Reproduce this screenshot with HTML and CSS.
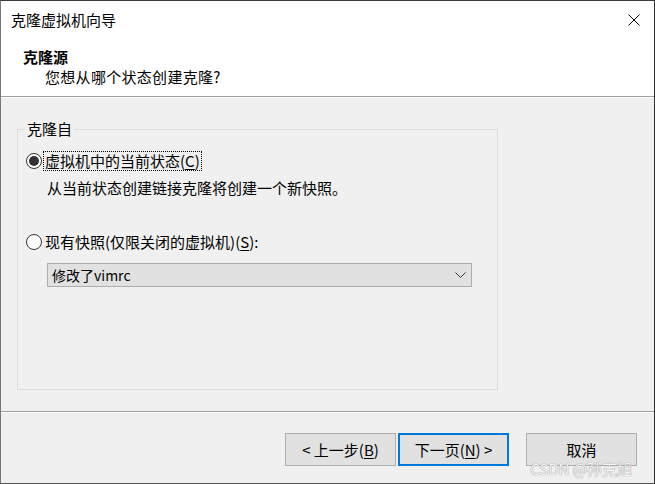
FILE: index.html
```html
<!DOCTYPE html>
<html lang="zh-CN">
<head>
<meta charset="utf-8">
<title>克隆虚拟机向导</title>
<link rel="stylesheet" href="styles.css">
</head>
<body>
<div class="window">
  <div class="header">
    <div class="titlebar">
      <span class="title">克隆虚拟机向导</span>
      <svg class="close" width="12" height="12" viewBox="0 0 12 12"><path d="M0.5 0.5 L11.5 11.5 M11.5 0.5 L0.5 11.5" stroke="#000" stroke-width="1" fill="none"/></svg>
    </div>
    <div class="intro">
      <div class="intro-title">克隆源</div>
      <div class="intro-sub">您想从哪个状态创建克隆?</div>
    </div>
  </div>
  <div class="body">
    <fieldset class="group">
      <legend class="legend">克隆自</legend>
      <div class="radio-row first">
        <span class="radio checked"></span>
        <span class="label focus">虚拟机中的当前状态(<u>C</u>)</span>
      </div>
      <div class="desc">从当前状态创建链接克隆将创建一个新快照。</div>
      <div class="radio-row second">
        <span class="radio"></span>
        <span class="label">现有快照(仅限关闭的虚拟机)(<u>S</u>):</span>
      </div>
      <div class="select">
        <span class="select-text">修改了vimrc</span>
        <svg class="chevron" width="11" height="6" viewBox="0 0 11 6"><path d="M0.5 0.5 L5.5 5.5 L10.5 0.5" stroke="#333" stroke-width="1" fill="none"/></svg>
      </div>
    </fieldset>
  </div>
  <div class="footer">
    <button class="btn">&lt; 上一步(<u>B</u>)</button>
    <button class="btn primary">下一页(<u>N</u>) &gt;</button>
    <button class="btn cancel">取消</button>
    <span class="watermark">CSDN @孙克旭</span>
  </div>
</div>
</body>
</html>
```

FILE: styles.css
```css
* { box-sizing: border-box; }
html, body {
  margin: 0;
  padding: 0;
  width: 655px;
  height: 484px;
  overflow: hidden;
  background: #f0f0f0;
}
body {
  font-family: "Noto Sans CJK SC", "Microsoft YaHei", sans-serif;
  font-size: 15px;
  color: #000;
}
.window {
  position: relative;
  width: 655px;
  height: 484px;
  border: 1px solid #777;
  border-top-color: #3a3a3a;
  border-right-color: #2e2e2e;
  border-bottom-color: #555;
  background: #f0f0f0;
  display: flex;
  flex-direction: column;
}
.header {
  background: #fff;
  border-bottom: 1px solid #a0a0a0;
  height: 96px;
  flex: none;
}
.titlebar {
  height: 37px;
  display: flex;
  align-items: center;
  justify-content: space-between;
  padding: 0 14px 0 10px;
}
.title { line-height: 20px; }
.close { display: block; }
.intro { padding: 9px 0 0 0; }
.intro-title {
  font-weight: bold;
  line-height: 20px;
  padding-left: 22px;
}
.intro-sub {
  line-height: 20px;
  padding-left: 44px;
  letter-spacing: 0.3px;
}
.body {
  flex: none;
  height: 314px;
  border-top: 1px solid #fff;
  padding: 21px 0 0 16px;
}
.group {
  margin: 0;
  width: 481px;
  height: 271px;
  border: 1px solid #dcdcdc;
  padding: 0;
}
.legend {
  margin-left: 7px;
  padding: 0 2px;
  line-height: 20px;
}
.radio-row {
  display: flex;
  align-items: center;
  height: 20px;
  padding-left: 8px;
}
.radio-row.first { margin-top: 12px; }
.radio-row.second { margin-top: 34px; }
.radio {
  width: 16px;
  height: 16px;
  border: 1px solid #333;
  border-radius: 50%;
  background: #fff;
  display: flex;
  align-items: center;
  justify-content: center;
  flex: none;
}
.radio.checked::after {
  content: "";
  width: 10px;
  height: 10px;
  border-radius: 50%;
  background: #333;
}
.label {
  margin-left: 2px;
  line-height: 18px;
  padding: 0 1px;
}
.label.focus { outline: 1px dotted #000; outline-offset: 0; }
.label u, .btn u { text-underline-offset: 2px; }
.desc {
  margin-top: 7px;
  line-height: 20px;
  padding-left: 29px;
}
.select {
  margin: 11px 0 0 29px;
  width: 425px;
  height: 24px;
  background: #e1e1e1;
  border: 1px solid #adadad;
  display: flex;
  align-items: center;
  justify-content: space-between;
  padding: 0 5px 0 4px;
}
.select-text { line-height: 20px; font-size: 14px; }
.chevron { display: block; }
.footer {
  flex: 1;
  border-top: 1px solid #a0a0a0;
  box-shadow: inset 0 1px 0 #fff;
  display: flex;
  align-items: flex-start;
  padding: 21px 17px 0 0;
  justify-content: flex-end;
}
.btn {
  font-family: inherit;
  font-size: 15px;
  color: #000;
  width: 111px;
  height: 33px;
  background: #e1e1e1;
  border: 1px solid #adadad;
  padding: 0;
  margin: 0;
  line-height: 20px;
}
.btn.primary {
  margin-left: 2px;
  border: 2px solid #0078d7;
}
.btn.cancel { margin-left: 17px; }
.watermark {
  position: absolute;
  right: 22px;
  bottom: 5px;
  font-size: 15px;
  line-height: 18px;
  color: #f4f4f4;
  text-shadow: 0 0 1px #9a9a9a, 0 0 1px #9a9a9a;
}
```
